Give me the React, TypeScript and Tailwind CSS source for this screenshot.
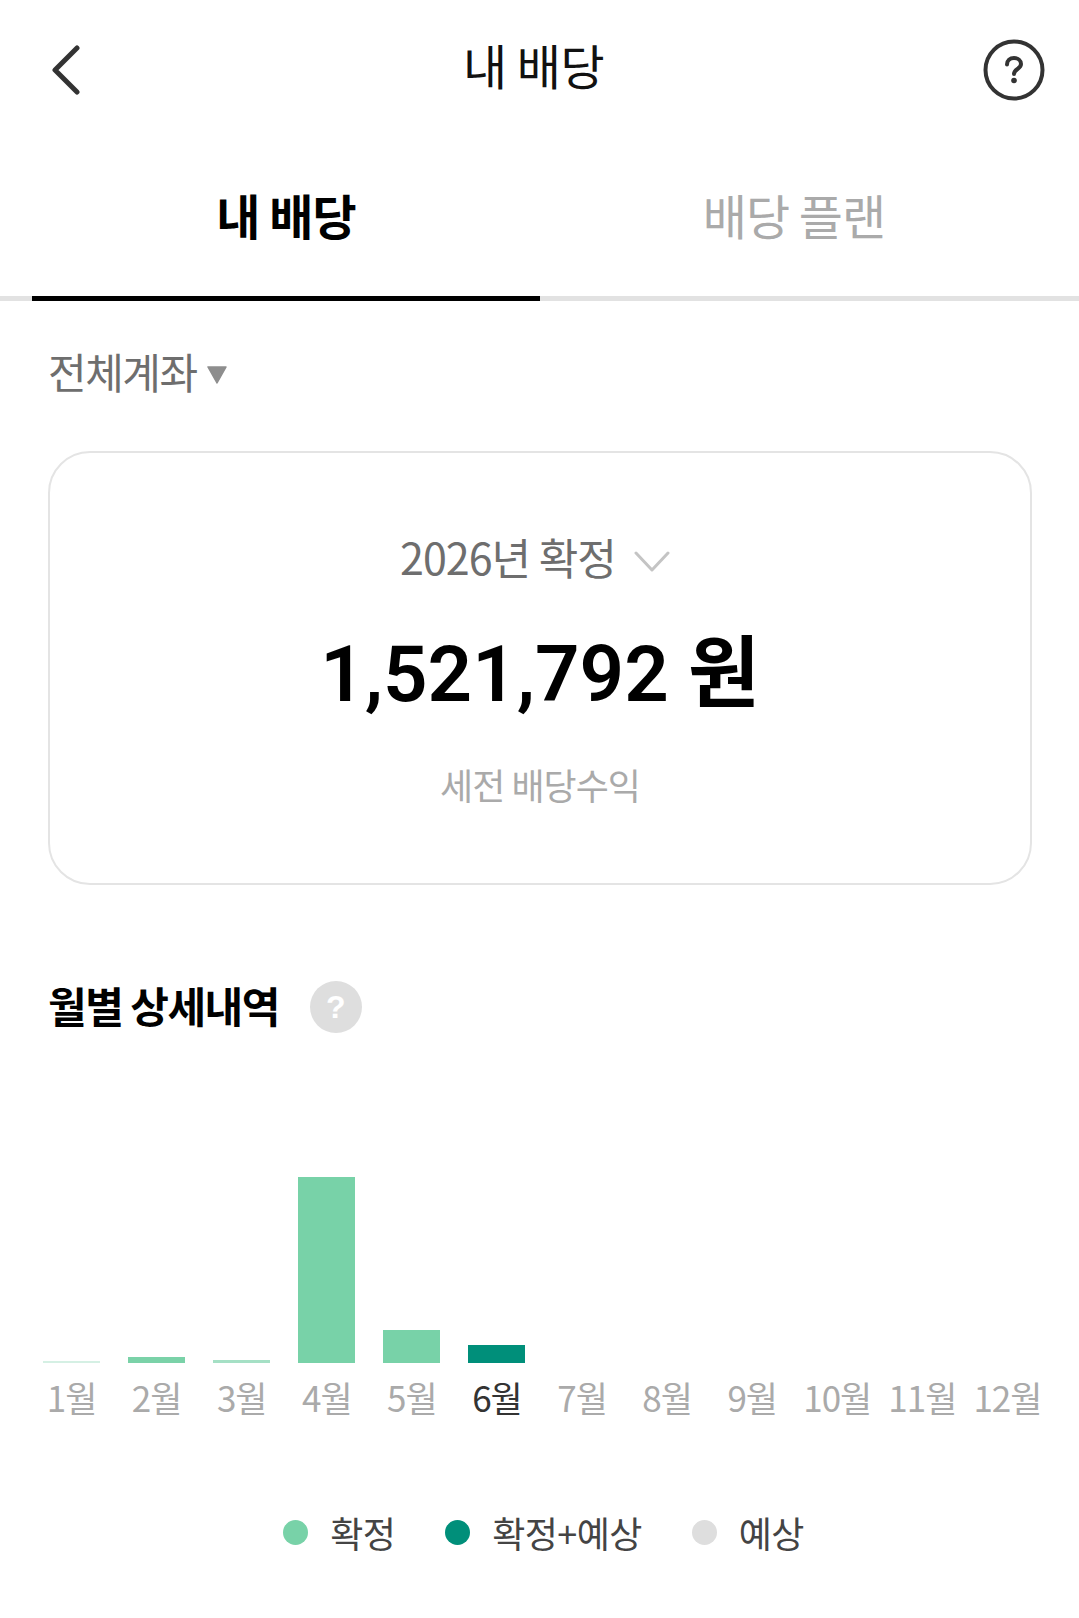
const bars = [
  { label: '1월', height: 2, color: 'bg-[#d5f0e4]' },
  { label: '2월', height: 6, color: 'bg-[#7ad2a8]' },
  { label: '3월', height: 3, color: 'bg-[#a5e0c5]' },
  { label: '4월', height: 186, color: 'bg-[#78d2a8]' },
  { label: '5월', height: 33, color: 'bg-[#78d2a8]' },
  { label: '6월', height: 18, color: 'bg-[#008f7a]', active: true },
  { label: '7월', height: 0, color: '' },
  { label: '8월', height: 0, color: '' },
  { label: '9월', height: 0, color: '' },
  { label: '10월', height: 0, color: '' },
  { label: '11월', height: 0, color: '' },
  { label: '12월', height: 0, color: '' },
];

const legend = [
  { label: '확정', color: 'bg-[#78d2a8]' },
  { label: '확정+예상', color: 'bg-[#008f7a]' },
  { label: '예상', color: 'bg-[#dedede]' },
];

export default function App() {
  return (
    <div className="w-[1079px] min-h-[1618px] bg-white font-['Noto_Sans_CJK_KR','Noto_Sans',sans-serif]">
      <header className="flex h-[140px] items-center justify-between pl-[50px] pr-[34px]">
        <svg width="32" height="50" viewBox="0 0 32 50" fill="none">
          <path d="M27 3 L5 25 L27 47" stroke="#333" strokeWidth="5" strokeLinecap="round" strokeLinejoin="round" />
        </svg>
        <h1 className="text-[48px] leading-[60px] font-normal tracking-[-0.5px] text-[#111] ml-[2px] mb-[12px]">내 배당</h1>
        <svg width="62" height="62" viewBox="0 0 62 62" fill="none">
          <circle cx="31" cy="31" r="28.5" stroke="#333" strokeWidth="4" />
          <path d="M24 25.5c0-3.8 3-6.5 7-6.5s7 2.6 7 6c0 5-7 5-7 10" stroke="#333" strokeWidth="4" strokeLinecap="round" />
          <circle cx="31" cy="41.5" r="2.8" fill="#333" />
        </svg>
      </header>

      <nav className="flex h-[161px] border-b-[5px] border-[#e2e2e2] pl-[32px]">
        <div className="relative flex w-[508px] items-center justify-center pb-[9px] text-[48px] font-bold tracking-[-1px] text-black">
          내 배당
          <span className="absolute bottom-[-5px] left-0 right-0 h-[5px] bg-black" />
        </div>
        <div className="flex w-[508px] items-center justify-center pb-[9px] text-[48px] tracking-[-1px] text-[#aaaaaa]">
          배당 플랜
        </div>
      </nav>

      <main className="pl-[48px] pr-[47px]">
        <div className="flex h-[150px] items-center pb-[12px]">
          <span className="text-[42px] tracking-[-1.5px] text-[#6e6e6e]">전체계좌</span>
          <svg width="20" height="18" viewBox="0 0 20 18" className="ml-[10px] mt-[10px]">
            <path d="M1 1H19L10 17Z" fill="#8e8e8e" stroke="#8e8e8e" strokeWidth="1.5" strokeLinejoin="round" />
          </svg>
        </div>

        <section className="flex h-[434px] flex-col items-center rounded-[42px] border-2 border-[#e4e4e4]">
          <div className="mt-[73px] mr-[10px] flex h-[60px] items-center">
            <span className="text-[43px] tracking-[-1px] text-[#6e6e6e]">2026년 확정</span>
            <svg width="36" height="22" viewBox="0 0 36 22" fill="none" className="ml-[18px] mt-[12px]">
              <path d="M2 2 L18 19 L34 2" stroke="#c4c4c4" strokeWidth="3" strokeLinecap="round" strokeLinejoin="round" />
            </svg>
          </div>
          <div className="mt-[31px] font-['Roboto','Noto_Sans_CJK_KR',sans-serif] text-[78px] leading-[100px] font-semibold text-black">
            1,521,792 <span className="font-['Noto_Sans_CJK_KR',sans-serif]">원</span>
          </div>
          <div className="mt-[34px] text-[36px] leading-[50px] tracking-[-1px] text-[#aaaaaa]">세전 배당수익</div>
        </section>

        <div className="mt-[92px] flex items-center">
          <h2 className="text-[42px] leading-[56px] font-bold tracking-[-1.5px] text-black">월별 상세내역</h2>
          <span className="ml-[31px] mt-[4px] flex h-[52px] w-[52px] items-center justify-center rounded-full bg-[#dedede] font-['Liberation_Sans',sans-serif] text-[32px] font-bold text-white">
            ?
          </span>
        </div>
      </main>

      <section className="mt-[143px] grid grid-cols-12 px-[29px]">
        {bars.map((bar) => (
          <div key={bar.label} className="flex flex-col items-center">
            <div className="flex h-[187px] items-end">
              {bar.height > 0 && (
                <div className={`w-[57px] ${bar.color}`} style={{ height: bar.height }} />
              )}
            </div>
            <span
              className={`mt-[9px] text-[35px] leading-[50px] tracking-[-1px] ${
                bar.active ? 'text-[#333333]' : 'text-[#aaaaaa]'
              }`}
            >
              {bar.label}
            </span>
          </div>
        ))}
      </section>

      <div className="mt-[85px] ml-[8px] flex items-center justify-center gap-[50px]">
        {legend.map((item) => (
          <div key={item.label} className="flex items-center gap-[22px]">
            <span className={`h-[25px] w-[25px] rounded-full ${item.color}`} />
            <span className="text-[36px] leading-[50px] tracking-[-0.6px] text-[#444444]">{item.label}</span>
          </div>
        ))}
      </div>
    </div>
  );
}
